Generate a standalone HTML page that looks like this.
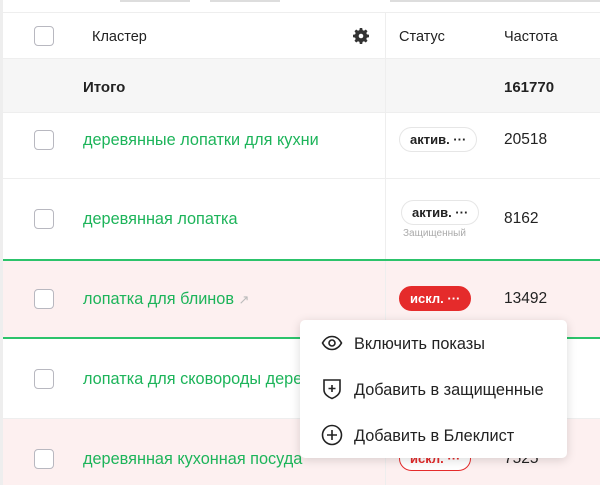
<!DOCTYPE html>
<html><head><meta charset="utf-8"><style>
*{margin:0;padding:0;box-sizing:border-box}
body{width:600px;height:485px;overflow:hidden;background:#fff;font-family:"Liberation Sans",sans-serif;position:relative;color:#222}
.a{position:absolute}
.cb{position:absolute;left:34px;width:20px;height:20px;border:1.5px solid #b8b8c0;border-radius:4px;background:#fff}
.g{position:absolute;left:83px;color:#1db45a;font-size:16.3px;white-space:nowrap}
.n{position:absolute;left:504px;font-size:15.5px;color:#222}
.pill{position:absolute;height:25px;border-radius:13px;font-size:13px;font-weight:bold;line-height:23px;padding:0 10px}
.row{position:absolute;left:3px;right:0}
.mi{position:absolute;font-size:16.3px;color:#222;white-space:nowrap}
</style></head><body>
<div class="a" style="left:0;top:0;width:3px;height:485px;background:#eee"></div>
<div class="a" style="left:120px;top:0;width:70px;height:2px;background:#ddd"></div>
<div class="a" style="left:210px;top:0;width:70px;height:2px;background:#ddd"></div>
<div class="a" style="left:390px;top:0;width:210px;height:2px;background:#ddd"></div>
<div class="row" style="top:12px;height:1px;background:#eee"></div>
<div class="row" style="top:58px;height:55px;background:#f6f6f6;border-top:1px solid #eee;border-bottom:1px solid #eee"></div>
<div class="row" style="top:178px;height:1px;background:#eee"></div>
<div class="row" style="top:259px;height:80px;background:#fdf0f0"></div>
<div class="row" style="top:418px;height:67px;background:#fdf0f0;border-top:1px solid #eee"></div>
<div class="a" style="left:385px;top:12px;width:1px;height:473px;background:#eee"></div>
<div class="row" style="top:259px;height:2px;background:#2cc36b"></div>
<div class="row" style="top:337px;height:2px;background:#2cc36b"></div>

<div class="cb" style="top:26px"></div>
<div class="a" style="left:92px;top:29px;font-size:14.5px">Кластер</div>
<svg class="a" style="left:353px;top:28px" width="16" height="16" viewBox="0 0 16 16"><path fill="#333" d="M6.8 0h2.4l.4 2.1 1.4.6 1.8-1.2 1.7 1.7-1.2 1.8.6 1.4 2.1.4v2.4l-2.1.4-.6 1.4 1.2 1.8-1.7 1.7-1.8-1.2-1.4.6-.4 2.1H6.8l-.4-2.1-1.4-.6-1.8 1.2-1.7-1.7 1.2-1.8-.6-1.4L0 9.2V6.8l2.1-.4.6-1.4-1.2-1.8 1.7-1.7 1.8 1.2 1.4-.6z"/><circle cx="8" cy="8" r="2.3" fill="#fff"/></svg>
<div class="a" style="left:399px;top:29px;font-size:14.5px">Статус</div>
<div class="a" style="left:504px;top:29px;font-size:14.5px">Частота</div>

<div class="a" style="left:83px;top:79px;font-size:15px;font-weight:bold">Итого</div>
<div class="a" style="left:504px;top:79px;font-size:15px;font-weight:bold">161770</div>

<div class="cb" style="top:130px"></div>
<div class="g" style="top:131px">деревянные лопатки для кухни</div>
<div class="pill" style="left:399px;top:127px;border:1px solid #e6e6e6;background:#fff;color:#222">актив. ···</div>
<div class="n" style="top:131px">20518</div>

<div class="cb" style="top:209px"></div>
<div class="g" style="top:210px">деревянная лопатка</div>
<div class="pill" style="left:401px;top:200px;border:1px solid #e6e6e6;background:#fff;color:#222">актив. ···</div>
<div class="a" style="left:403px;top:228px;font-size:10px;color:#aaa">Защищенный</div>
<div class="n" style="top:210px">8162</div>

<div class="cb" style="top:289px"></div>
<div class="g" style="top:290px">лопатка для блинов <span style="color:#bbb;font-size:13px">↗</span></div>
<div class="pill" style="left:399px;top:286px;background:#e52b2b;color:#fff;border:1px solid #e52b2b">искл. ···</div>
<div class="n" style="top:290px">13492</div>

<div class="cb" style="top:369px"></div>
<div class="g" style="top:370px">лопатка для сковороды дерев</div>

<div class="cb" style="top:449px"></div>
<div class="g" style="top:450px">деревянная кухонная посуда</div>
<div class="pill" style="left:399px;top:446px;border:1.5px solid #e52b2b;color:#e52b2b;background:#fff">искл. ···</div>
<div class="n" style="top:450px">7525</div>

<div class="a" style="left:300px;top:320px;width:267px;height:138px;background:#fff;border-radius:5px;box-shadow:0 2px 10px rgba(0,0,0,.15)"></div>
<svg class="a" style="left:321px;top:334px" width="22" height="18" viewBox="0 0 22 18"><path d="M1.5 9C4 4.5 7.3 2.5 11 2.5S18 4.5 20.5 9C18 13.5 14.7 15.5 11 15.5S4 13.5 1.5 9z" fill="none" stroke="#222" stroke-width="1.6"/><circle cx="11" cy="9" r="3" fill="none" stroke="#222" stroke-width="1.6"/></svg>
<div class="mi" style="left:354px;top:335px">Включить показы</div>
<svg class="a" style="left:322px;top:378px" width="20" height="22" viewBox="0 0 20 22"><path d="M2 2h16v10c0 4-4 7-8 8.5C6 19 2 16 2 12z" fill="none" stroke="#222" stroke-width="1.6"/><path d="M10 7v7M6.5 10.5h7" stroke="#222" stroke-width="1.6"/></svg>
<div class="mi" style="left:354px;top:381px">Добавить в защищенные</div>
<svg class="a" style="left:321px;top:424px" width="22" height="22" viewBox="0 0 22 22"><circle cx="11" cy="11" r="9.5" fill="none" stroke="#222" stroke-width="1.6"/><path d="M11 6v10M6 11h10" stroke="#222" stroke-width="1.6"/></svg>
<div class="mi" style="left:354px;top:427px">Добавить в Блеклист</div>
</body></html>
